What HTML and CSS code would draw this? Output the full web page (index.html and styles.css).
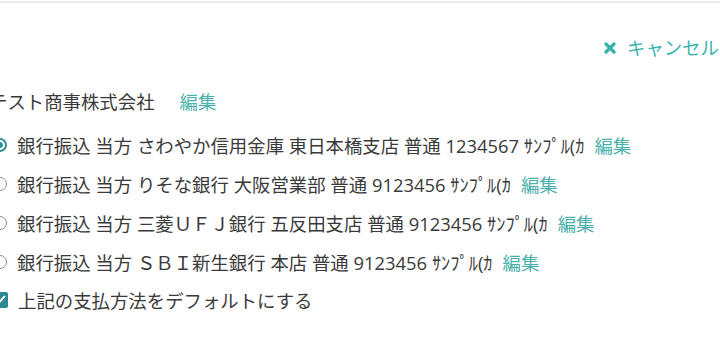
FILE: index.html
```html
<!DOCTYPE html>
<html lang="ja">
<head>
<meta charset="utf-8">
<link rel="stylesheet" href="styles.css">
</head>
<body>
<div class="frame">
  <div class="header">
    <a class="cancel"><svg class="x" viewBox="0 0 12 12" width="12" height="12"><path d="M2 2L10 10M10 2L2 10" stroke="#35b2ac" stroke-width="3.2" stroke-linecap="round"/></svg><span>キャンセル</span></a>
  </div>
  <div class="page">
    <div class="company">
      <span>テスト商事株式会社</span>
      <a class="edit">編集</a>
    </div>
    <ul class="methods">
      <li class="row"><span class="radio checked"></span><span>銀行振込 当方 さわやか信用金庫 東日本橋支店 普通 1234567 ｻﾝﾌﾟﾙ(ｶ</span><a class="edit">編集</a></li>
      <li class="row"><span class="radio"></span><span>銀行振込 当方 りそな銀行 大阪営業部 普通 9123456 ｻﾝﾌﾟﾙ(ｶ</span><a class="edit">編集</a></li>
      <li class="row"><span class="radio"></span><span>銀行振込 当方 三菱ＵＦＪ銀行 五反田支店 普通 9123456 ｻﾝﾌﾟﾙ(ｶ</span><a class="edit">編集</a></li>
      <li class="row"><span class="radio"></span><span>銀行振込 当方 ＳＢＩ新生銀行 本店 普通 9123456 ｻﾝﾌﾟﾙ(ｶ</span><a class="edit">編集</a></li>
    </ul>
    <label class="default">
      <span class="check"><svg viewBox="0 0 16 16" width="15" height="15"><path d="M4 8.5l2.6 2.6L12 5" fill="none" stroke="#fff" stroke-width="2.2" stroke-linecap="round" stroke-linejoin="round"/></svg></span>
      <span>上記の支払方法をデフォルトにする</span>
    </label>
  </div>
</div>
</body>
</html>
```
FILE: styles.css
```css
html, body {
  margin: 0;
  padding: 0;
  background: #fff;
  overflow: hidden;
}
body {
  font-family: "Open Sans", "Noto Sans CJK JP", sans-serif;
  font-size: 18.4px;
  color: #3a3a3a;
  width: 720px;
  height: 360px;
  padding-top: 1px;
  box-sizing: border-box;
}
.frame {
  border-top: 2px solid #ececec;
}
.header {
  display: flex;
  padding: 30px 0 0 604px;
  height: 30px;
  white-space: nowrap;
}
.cancel {
  color: #3bb3ad;
  display: flex;
  align-items: center;
  gap: 11px;
  line-height: 26px;
}
.x {
  flex: none;
}
.page {
  margin-left: -7px;
  padding-top: 25px;
}
.company {
  display: flex;
  gap: 25px;
  line-height: 27px;
  height: 27px;
  margin-left: -4px;
}
.edit {
  color: #4bb1ab;
}
.methods {
  list-style: none;
  margin: 10px 0 0;
  padding: 0;
}
.row {
  display: flex;
  align-items: center;
  height: 39px;
  white-space: nowrap;
}
.row .edit {
  margin-left: 10px;
}
.radio {
  width: 14px;
  height: 14px;
  box-sizing: border-box;
  border: 1px solid #8a8a8a;
  border-radius: 50%;
  margin-right: 10px;
  flex: none;
}
.radio.checked {
  border: 2px solid #2a8f99;
  background: radial-gradient(circle, #2a8f99 0, #2a8f99 2.6px, #fff 3.2px);
}
.default {
  display: flex;
  align-items: center;
  height: 37px;
}
.check {
  width: 15px;
  height: 16px;
  background: #2b8895;
  border-radius: 2px;
  margin-right: 10px;
  display: flex;
  align-items: center;
}
```
